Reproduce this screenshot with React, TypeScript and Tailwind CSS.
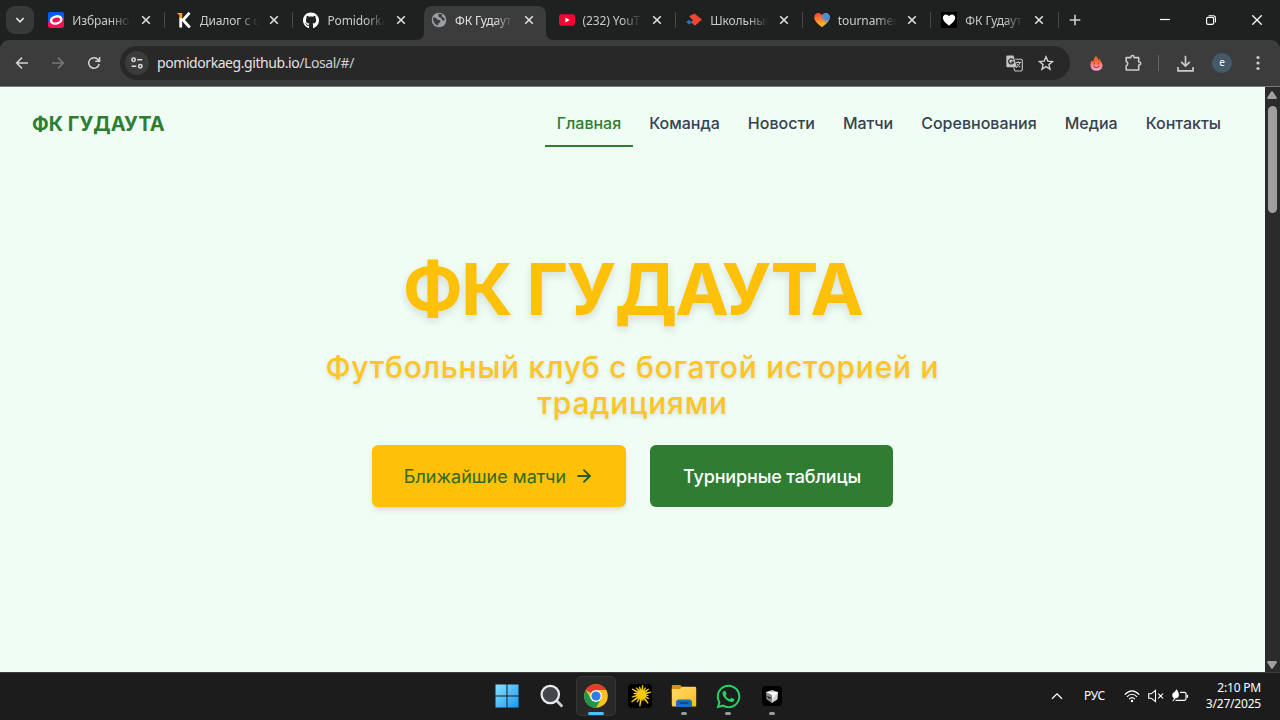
import React from "react";
import { ArrowRight } from "lucide-react";
import { FaGithub, FaWhatsapp } from "react-icons/fa";

type IconProps = { className?: string };

const CloseIcon = ({ className = "" }: IconProps) => (
  <svg viewBox="0 0 10 10" className={className} fill="none" stroke="currentColor" strokeWidth="1.6">
    <path d="M1.2 1.2l7.6 7.6M8.8 1.2L1.2 8.8" />
  </svg>
);

const OvalIcon = () => (
  <svg viewBox="0 0 16 16" className="size-4">
    <rect width="16" height="16" rx="2.5" fill="#f91155" />
    <path d="M0 10V2.500Q0 0 2.500 0H13.500Q16 0 16 2.500V6z" fill="#005bff" />
    <ellipse cx="8.200" cy="8" rx="6.500" ry="4.700" transform="rotate(-14 8 8)" fill="#fff" />
    <ellipse cx="8.200" cy="8" rx="4" ry="2.300" transform="rotate(-14 8 8)" fill="#f91155" />
  </svg>
);

const KIcon = () => (
  <svg viewBox="0 0 16 16" className="size-4">
    <path d="M4.700 5.500v10M13.500 .8L7 8l6.800 7.500" fill="none" stroke="#fff" strokeWidth="2.800" />
    <path d="M.8 1h5.400v4.300l-3 1.500.2-3.600z" fill="#ffa514" />
  </svg>
);

const Globe = () => (
  <svg viewBox="0 0 16 16" className="size-4">
    <circle cx="8" cy="8" r="7.300" fill="#9aa0a6" />
    <path d="M2 5.600l2.700.2 2 1.900 2.300.4.500 1.600-2 1.700-.6 2.200C3.900 12.700 1.800 9.500 2 5.600zM7.200 1.800l4.100.5-.7 1.900 3 2.400-.1 2.400-2.400-1-1-2-2.500-1.200z" fill="#3c3c3c" />
  </svg>
);

const YouTube = () => (
  <svg viewBox="0 0 16 16" className="size-4">
    <rect y="2.200" width="16" height="11.600" rx="2.700" fill="#ff0033" />
    <path d="M6.400 5.500v5l4.200-2.500z" fill="#fff" />
  </svg>
);

const School = () => (
  <svg viewBox="0 0 16 16" className="size-4">
    <path d="M3.200 4.200L8.400 1.500 16 7.600 9 13.700 5 10.500l1.800-2.200z" fill="#f4452f" />
    <path d="M0 10.100l3-2.200 3.200 2.300-2.900 2.300z" fill="#1779c4" />
  </svg>
);

const heartPath = "M8 15.200C6 13.300.2 9.700.2 5.200.2 2.600 2 .9 4.200.9 6 .9 7.200 2 8 3.200 8.800 2 10 .9 11.800.9c2.200 0 4 1.700 4 4.300 0 4.500-5.800 8.100-7.800 10z";

const ColorHeart = () => (
  <svg viewBox="0 0 16 16" className="size-4">
    <defs>
      <linearGradient id="warm" x1="0" y1="0" x2="0.300" y2="1">
        <stop offset="0.150" stopColor="#ff4a32" />
        <stop offset="0.800" stopColor="#ffae22" />
      </linearGradient>
      <radialGradient id="cool" cx="0.950" cy="0.180" r="0.620">
        <stop offset="0" stopColor="#2498ff" />
        <stop offset="0.500" stopColor="#5b87ce" />
        <stop offset="1" stopColor="#5b87ce" stopOpacity="0" />
      </radialGradient>
    </defs>
    <path d={heartPath} fill="url(#warm)" />
    <path d={heartPath} fill="url(#cool)" />
  </svg>
);

const WhiteHeart = () => (
  <svg viewBox="0 0 16 16" className="size-4">
    <rect width="16" height="16" fill="#000" />
    <path d={heartPath} fill="#fff" transform="translate(1.700 1.700) scale(.79)" />
  </svg>
);

type Tab = { title: string; icon: React.ReactNode; active?: boolean; divider?: boolean };

const tabs: Tab[] = [
  { title: "Избранно", icon: <OvalIcon />, divider: true },
  { title: "Диалог с d", icon: <KIcon />, divider: true },
  { title: "Pomidorka", icon: <FaGithub className="size-[17px] text-white" /> },
  { title: "ФК Гудаут", icon: <Globe />, active: true },
  { title: "(232) YouT", icon: <YouTube />, divider: true },
  { title: "Школьный", icon: <School />, divider: true },
  { title: "tournamen", icon: <ColorHeart />, divider: true },
  { title: "ФК Гудаут", icon: <WhiteHeart />, divider: true },
];

const TabItem = ({ tab }: { tab: Tab }) => (
  <div className="relative flex h-10 w-[127.600px] shrink-0 items-center pl-[10.800px]">
    {tab.active && (
      <svg viewBox="0 0 138 34" className="absolute top-[6px] left-[-4px] h-[34px] w-[138px]">
        <path d="M0 34Q8 34 8 26V9Q8 0 17 0H121Q130 0 130 9V26Q130 34 138 34Z" fill="#3c3c3c" />
      </svg>
    )}
    <span className="relative flex w-4 shrink-0 justify-center">{tab.icon}</span>
    <span
      className={
        "relative mt-[2px] ml-2 w-[60px] whitespace-nowrap text-[12px] tracking-[-0.100px] [mask-image:linear-gradient(to_right,black_65%,transparent_97%)] " +
        (tab.active ? "text-[#e3e3e3]" : "text-[#c9caca]")
      }
    >
      {tab.title}
    </span>
    <CloseIcon className="relative ml-[9px] size-[10px] text-[#dedede]" />
    {tab.divider && <span className="absolute right-[-0.500px] h-4 w-px bg-[#484a49]" />}
  </div>
);

const TabStrip = () => (
  <div className="flex h-10 items-center bg-[#1f2120]">
    <button className="ml-[6px] flex size-7 shrink-0 items-center justify-center rounded-[9px] bg-[#373938]">
      <svg viewBox="0 0 10 10" className="size-[10px]" fill="none" stroke="#e3e3e3" strokeWidth="1.700">
        <path d="M1.300 3l3.700 3.800L8.700 3" />
      </svg>
    </button>
    <div className="ml-[3.400px] flex">
      {tabs.map((t, i) => (
        <TabItem key={i} tab={t} />
      ))}
    </div>
    <svg viewBox="0 0 12 12" className="ml-[11px] size-3 shrink-0" stroke="#d0d0d0" strokeWidth="1.600">
      <path d="M6 .7v10.600M.7 6h10.600" />
    </svg>
    <div className="ml-auto flex items-center pr-[18px] text-white">
      <svg viewBox="0 0 10 10" className="size-[10px]" stroke="currentColor" strokeWidth="1.200">
        <path d="M0 4.500h10" />
      </svg>
      <svg viewBox="0 0 10 10" className="ml-[36px] size-[10px]" fill="none" stroke="currentColor" strokeWidth="1.150">
        <rect x=".6" y="2.400" width="7" height="7" rx="1.400" />
        <path d="M2.600 .7H7.200Q9.400 .7 9.400 2.900V7.400" />
      </svg>
      <svg viewBox="0 0 10 10" className="ml-[36px] size-[10px]" stroke="currentColor" strokeWidth="1.250">
        <path d="M.3 .3l9.400 9.400M9.700 .3L.3 9.700" />
      </svg>
    </div>
  </div>
);

const Toolbar = () => (
  <div className="bg-[#1f2120]">
    <div className="flex h-[47px] items-center rounded-t-[9px] border-b border-[#777a78] bg-[#3c3c3c] text-[#c7c7c7]">
      <svg viewBox="0 0 14 14" className="ml-[15px] size-[14px] shrink-0" fill="none" stroke="#d3d3d3" strokeWidth="1.500">
        <path d="M13 7H2M7 1.600L1.600 7 7 12.400" />
      </svg>
      <svg viewBox="0 0 14 14" className="ml-[22px] size-[14px] shrink-0" fill="none" stroke="#777" strokeWidth="1.500">
        <path d="M1 7h11M7 1.600L12.400 7 7 12.400" />
      </svg>
      <svg viewBox="0 0 14 14" className="ml-[22px] size-[14px] shrink-0" fill="none" stroke="#d3d3d3" strokeWidth="1.500">
        <path d="M12.200 8A5.300 5.300 0 1 1 11.200 3.700L12.600 5.200M12.600 1V5.300H8.300" />
      </svg>
      <div className="ml-[19px] flex h-[34px] w-[950px] items-center rounded-full bg-[#282828]">
        <span className="ml-[5px] flex size-6 items-center justify-center rounded-full bg-[#3b3b3b]">
          <svg viewBox="0 0 14 14" className="size-[14px]" fill="none" stroke="#dcdcdc" strokeWidth="1.500">
            <circle cx="3.600" cy="3.800" r="1.700" />
            <path d="M7.300 3.800h4.900M1.600 10.200h4.700" />
            <circle cx="10.300" cy="10.200" r="1.700" />
          </svg>
        </span>
        <span className="ml-2 pb-px text-[14px] tracking-[-0.430px] text-[#e3e3e3]">
          pomidorkaeg.github.io<span className="text-[#cfcfcf]">/Losal/#/</span>
        </span>
        <svg viewBox="0 0 17 17" className="ml-auto size-[17px]">
          <path d="M1.500 .5h6l3.400 11.800H1.500Q.3 12.300.3 11V1.700Q.3 .5 1.500 .5z" fill="#c4c4c4" />
          <path d="M7.300 5.100A2.500 2.500 0 1 0 7.500 7.200H5.200" fill="none" stroke="#282828" strokeWidth="1.200" />
          <path d="M9.300 4.200h5.800q1.200 0 1.200 1.200v9.400q0 1.200-1.200 1.200H9L7.600 12.600" fill="none" stroke="#c4c4c4" strokeWidth="1.100" />
          <path d="M9.800 7.500h5.300M12.300 6v1.500M14 7.500q-1 3.600-3.800 5.300M10.800 8.600q1.400 2.500 3.600 3.600" fill="none" stroke="#c4c4c4" strokeWidth="1" />
        </svg>
        <svg viewBox="0 0 16 16" className="mr-4 ml-[15px] size-4" fill="none" stroke="#d0d0d0" strokeWidth="1.400">
          <path d="M8 1.800l1.800 4.300 4.700.4-3.600 3.100 1.100 4.600L8 11.700l-4 2.500 1.100-4.600-3.600-3.100 4.700-.4z" />
        </svg>
      </div>
      <svg viewBox="0 0 14 16" className="ml-[20px] h-[15px] w-[13px] shrink-0">
        <defs>
          <linearGradient id="flame" x1="0" y1="0" x2="0" y2="1">
            <stop offset="0.300" stopColor="#f96324" />
            <stop offset="0.900" stopColor="#ff9ed0" />
          </linearGradient>
        </defs>
        <path d="M6.200 0Q9 2 9.300 4.500L10.800 2.600Q11 5 12.500 6.800 14 9 13.300 11.500 12 15.800 7 15.800 2 15.800.7 11.500 0 8 1.700 4.800L3.400 6Q3.400 3.700 6.200 0z" fill="url(#flame)" />
        <path d="M4.700 7.200v1.800M9.300 7.200v1.800M3.800 10.800q3.200 3.200 6.400 0" fill="none" stroke="#8a4550" strokeWidth="1.100" />
      </svg>
      <svg viewBox="0 0 18 18" className="ml-[21px] size-[18px] shrink-0" fill="none" stroke="#cbcbcb" strokeWidth="1.600">
        <path d="M2.200 3.600H7V3a1.500 1.500 0 0 1 3 0v.6h4.700V8h.5a1.500 1.500 0 0 1 0 3h-.5v5H2.200v-4.200a2.200 2.200 0 0 0 0-4.200z" strokeLinejoin="round" />
      </svg>
      <span className="ml-[16px] h-4 w-px bg-[#656565]" />
      <svg viewBox="0 0 17 17" className="ml-[18px] size-[17px] shrink-0" fill="none" stroke="#cbcbcb" strokeWidth="1.700">
        <path d="M8.500 .8v10M4.200 6.800l4.300 4.300 4.300-4.300M1 12v3.800h15V12" />
      </svg>
      <span className="ml-[18px] flex size-5 shrink-0 items-center justify-center rounded-full bg-[#455a68] pb-px text-[10px] text-white">e</span>
      <svg viewBox="0 0 4 16" className="ml-[24px] h-4 w-1 shrink-0" fill="#cbcbcb">
        <circle cx="2" cy="2.500" r="1.600" />
        <circle cx="2" cy="8" r="1.600" />
        <circle cx="2" cy="13.500" r="1.600" />
      </svg>
    </div>
  </div>
);

const links = ["Главная", "Команда", "Новости", "Матчи", "Соревнования", "Медиа", "Контакты"];

const Site = () => (
  <main className="flex min-w-0 flex-1 flex-col bg-[#f0fdf5] font-[Inter,sans-serif]">
    <header className="flex h-[72px] items-center justify-between px-8">
      <span className="pt-px text-[20px] font-bold text-[#2e7d32]">ФК ГУДАУТА</span>
      <nav className="flex h-full items-center gap-1 text-[16px] font-medium text-[#374151]">
        {links.map((l, i) => (
          <a
            key={l}
            className={
              "relative px-3 " +
              (i === 0 ? "text-[#2e7d32] after:absolute after:inset-x-0 after:top-[34px] after:h-0.5 after:bg-[#2e7d32]" : "")
            }
          >
            {l}
          </a>
        ))}
      </nav>
    </header>
    <section className="flex flex-col items-center pt-[94px] text-center">
      <h1 className="text-[72px] leading-[72px] font-bold tracking-[-1.800px] text-[#ffc107] [text-shadow:0_4px_8px_rgba(0,0,0,0.120)]">ФК ГУДАУТА</h1>
      <p className="mt-6 w-[672px] text-[30px] leading-9 font-medium tracking-[0.750px] text-[#fdc526] [text-shadow:0_2px_4px_rgba(0,0,0,0.120)]">
        Футбольный клуб с богатой историей и традициями
      </p>
      <div className="mt-[24px] flex gap-6 text-[18px]">
        <button className="flex h-[62px] w-[254px] items-center justify-center rounded-md bg-[#ffc107] text-[#2e6b20] shadow-md">
          Ближайшие матчи
          <ArrowRight className="ml-2 size-5 text-[#245c1c]" strokeWidth={2.3} />
        </button>
        <button className="flex h-[62px] w-[243px] items-center justify-center rounded-md bg-[#2e7d32] pl-px font-medium tracking-[-0.140px] text-white">
          Турнирные таблицы
        </button>
      </div>
    </section>
  </main>
);

const Scrollbar = () => (
  <aside className="flex w-[15px] shrink-0 flex-col items-center bg-[#2b2b2b] pt-[4px] pr-px pb-[3px]">
    <svg viewBox="0 0 10 8" className="h-2 w-[10px]" fill="#a0a0a0">
      <path d="M4.200 .6Q5 0 5.800 .6L9.800 6.500Q10 8 9 8H1Q0 8 .2 6.500z" />
    </svg>
    <div className="mt-[7px] h-[107px] w-[9px] rounded-full bg-[#9f9f9f]" />
    <svg viewBox="0 0 10 8" className="mt-auto h-2 w-[10px] rotate-180" fill="#a0a0a0">
      <path d="M4.200 .6Q5 0 5.800 .6L9.800 6.500Q10 8 9 8H1Q0 8 .2 6.500z" />
    </svg>
  </aside>
);

const WindowsIcon = () => (
  <svg viewBox="0 0 24 24" className="size-6">
    <defs>
      <linearGradient id="win" x1="0" y1="0" x2="1" y2="1">
        <stop offset="0" stopColor="#8ae2ff" />
        <stop offset="1" stopColor="#1597f4" />
      </linearGradient>
    </defs>
    <path d="M.5 .5h11v11H.5zM12.500 .5h11v11h-11zM.5 12.500h11v11H.5zM12.500 12.500h11v11h-11z" fill="url(#win)" />
  </svg>
);

const SearchIcon = () => (
  <svg viewBox="0 0 24 24" className="size-6" fill="none">
    <path d="M17 17l4.500 4.700" stroke="#c9d0d5" strokeWidth="2.800" strokeLinecap="round" />
    <circle cx="10.300" cy="10.500" r="8.700" fill="#42474a" stroke="#e8ebed" strokeWidth="2.200" />
  </svg>
);

const ChromeIcon = () => (
  <svg viewBox="0 0 24 24" className="size-6">
    <circle cx="12" cy="12" r="11.800" fill="#fbc31c" />
    <path d="M12 12L1.780 6.100A11.800 11.800 0 0 1 22.220 6.100H12z" fill="#e53b2f" />
    <path d="M1.780 6.100A11.800 11.800 0 0 0 12 23.800L17.100 15 12 12 6.900 15z" fill="#21964b" />
    <circle cx="12" cy="12" r="5.900" fill="#fff" />
    <circle cx="12" cy="12" r="4.600" fill="#2f7bea" />
  </svg>
);

const rays = [9.5, 8, 9, 10, 7, 8.500, 11, 6.500, 12, 9, 12.500, 10, 8, 11, 8.500, 8];

const SparkIcon = () => (
  <svg viewBox="0 0 24 24" className="size-6">
    <rect width="24" height="24" rx="4" fill="#000" />
    <g fill="#f6c90e">
      <circle cx="13.500" cy="10.500" r="4.200" />
      {rays.map((r, i) => (
        <path key={i} d={`M12.300 10.500L12.900 ${10.5 - r}H14.100L14.700 10.500Z`} transform={`rotate(${i * 22.5 + 8} 13.500 10.500)`} />
      ))}
    </g>
  </svg>
);

const FolderIcon = () => (
  <svg viewBox="0 0 26 24" className="h-6 w-[26px]">
    <defs>
      <linearGradient id="folder" x1="0" y1="0" x2="1" y2="1">
        <stop offset="0" stopColor="#ffdc6d" />
        <stop offset="1" stopColor="#fdbb1f" />
      </linearGradient>
    </defs>
    <path d="M.8 8V2.300Q.8 1 2.200 1h7l2.300 2.300V8z" fill="#d99200" />
    <path d="M.8 5h8.400l2-2.300h12.600q1.400 0 1.400 1.400v18.400H2.200Q.8 22.500.8 21z" fill="url(#folder)" />
    <path d="M5 23v-4.500Q5 15.500 8 15.500h10q3 0 3 3V23z" fill="#1570c1" />
    <path d="M9 19h8" stroke="#0a3f7d" strokeWidth="1.400" strokeLinecap="round" />
  </svg>
);

const CubeIcon = () => (
  <svg viewBox="0 0 20 20" className="size-5">
    <rect width="20" height="20" rx="4" fill="#000" />
    <path d="M4 6L10 4l6 2-6 3z" fill="#c4c4c4" />
    <path d="M4 6l6 3v8l-5.500-3.800z" fill="#8b8b8b" />
    <path d="M16 6l-6 3v8l5.500-3.800z" fill="#d7d7d7" />
    <path d="M4 6h12l-6 7V9z" fill="#fff" />
    <path d="M4.300 9.500l5.700 2.500-3 .8z" fill="#222" />
  </svg>
);

const apps: { icon: React.ReactNode; state?: "active" | "open" }[] = [
  { icon: <SearchIcon /> },
  { icon: <ChromeIcon />, state: "active" },
  { icon: <SparkIcon /> },
  { icon: <FolderIcon />, state: "open" },
  { icon: <FaWhatsapp className="size-[27px] text-[#25d366]" />, state: "open" },
  { icon: <CubeIcon />, state: "open" },
];

const Taskbar = () => (
  <footer className="grid h-12 grid-cols-[1fr_auto_1fr] items-center border-t border-[#3a3b3a] bg-[#1c1c1c] pb-px text-white">
    <span />
    <div className="flex items-center gap-1 pr-px">
      <span className="mr-px flex size-10 items-center justify-center">
        <WindowsIcon />
      </span>
      {apps.map((a, i) => (
        <span
          key={i}
          className={
            "relative flex size-10 items-center justify-center rounded-[5px] " +
            (a.state === "active" ? "border border-[#353535] bg-[#292929]" : "")
          }
        >
          {a.icon}
          {a.state && (
            <span
              className={
                "absolute left-1/2 h-[3px] -translate-x-1/2 rounded-full " +
                (a.state === "active" ? "bottom-0 w-4 bg-[#4cc2ff]" : "bottom-px w-[6px] bg-[#9a9a9a]")
              }
            />
          )}
        </span>
      ))}
    </div>
    <div className="flex items-center justify-end pr-[19px] text-[12px]">
      <svg viewBox="0 0 12 8" className="h-2 w-3" fill="none" stroke="#fff" strokeWidth="1.300">
        <path d="M1 6.800l5-5 5 5" />
      </svg>
      <span className="ml-[21px] w-[22px] tracking-[-0.200px]">РУС</span>
      <svg viewBox="0 0 16 13" className="ml-[18px] h-[13px] w-4" fill="none" stroke="#fff" strokeWidth="1.200">
        <path d="M.7 4.600Q8-2.800 15.300 4.600M2.900 6.900Q8 1.600 13.100 6.900M5.100 9.200Q8 6.200 10.900 9.200" />
        <circle cx="8" cy="11" r="1.200" fill="#fff" stroke="none" />
      </svg>
      <svg viewBox="0 0 16 14" className="ml-[8px] h-[14px] w-4" fill="none" stroke="#fff" strokeWidth="1.100">
        <path d="M.7 4.800h2.600L7.500 1.300v11.400L3.300 9.200H.7zM10.200 4.600l4.800 4.800M15 4.600l-4.800 4.800" />
      </svg>
      <svg viewBox="0 0 18 14" className="ml-[7px] h-[14px] w-[18px]" fill="none" stroke="#fff" strokeWidth="1.200">
        <path d="M9 3.300h4.500q1.500 0 1.500 1.500v5q0 1.500-1.500 1.500H4.500M16.500 5.700v3" />
        <path d="M5.600 .3Q9 5 7.500 7.800 6.500 9.300 4.500 9.300L2 12.500 1.500 12 3 9.200Q1 8 1.200 5.700 1.600 3.500 3.500 3z" fill="#fff" stroke="none" />
      </svg>
      <div className="ml-[16px] w-[56px] text-right leading-4 whitespace-nowrap">
        <div className="tracking-[-0.200px]">2:10 PM</div>
        <div className="tracking-[-0.200px]">3/27/2025</div>
      </div>
    </div>
  </footer>
);

export default function App() {
  return (
    <div className="flex h-[720px] w-[1280px] flex-col overflow-hidden bg-[#1f2120] font-['Noto_Sans',sans-serif]">
      <TabStrip />
      <Toolbar />
      <div className="flex min-h-0 flex-1">
        <Site />
        <Scrollbar />
      </div>
      <Taskbar />
    </div>
  );
}
